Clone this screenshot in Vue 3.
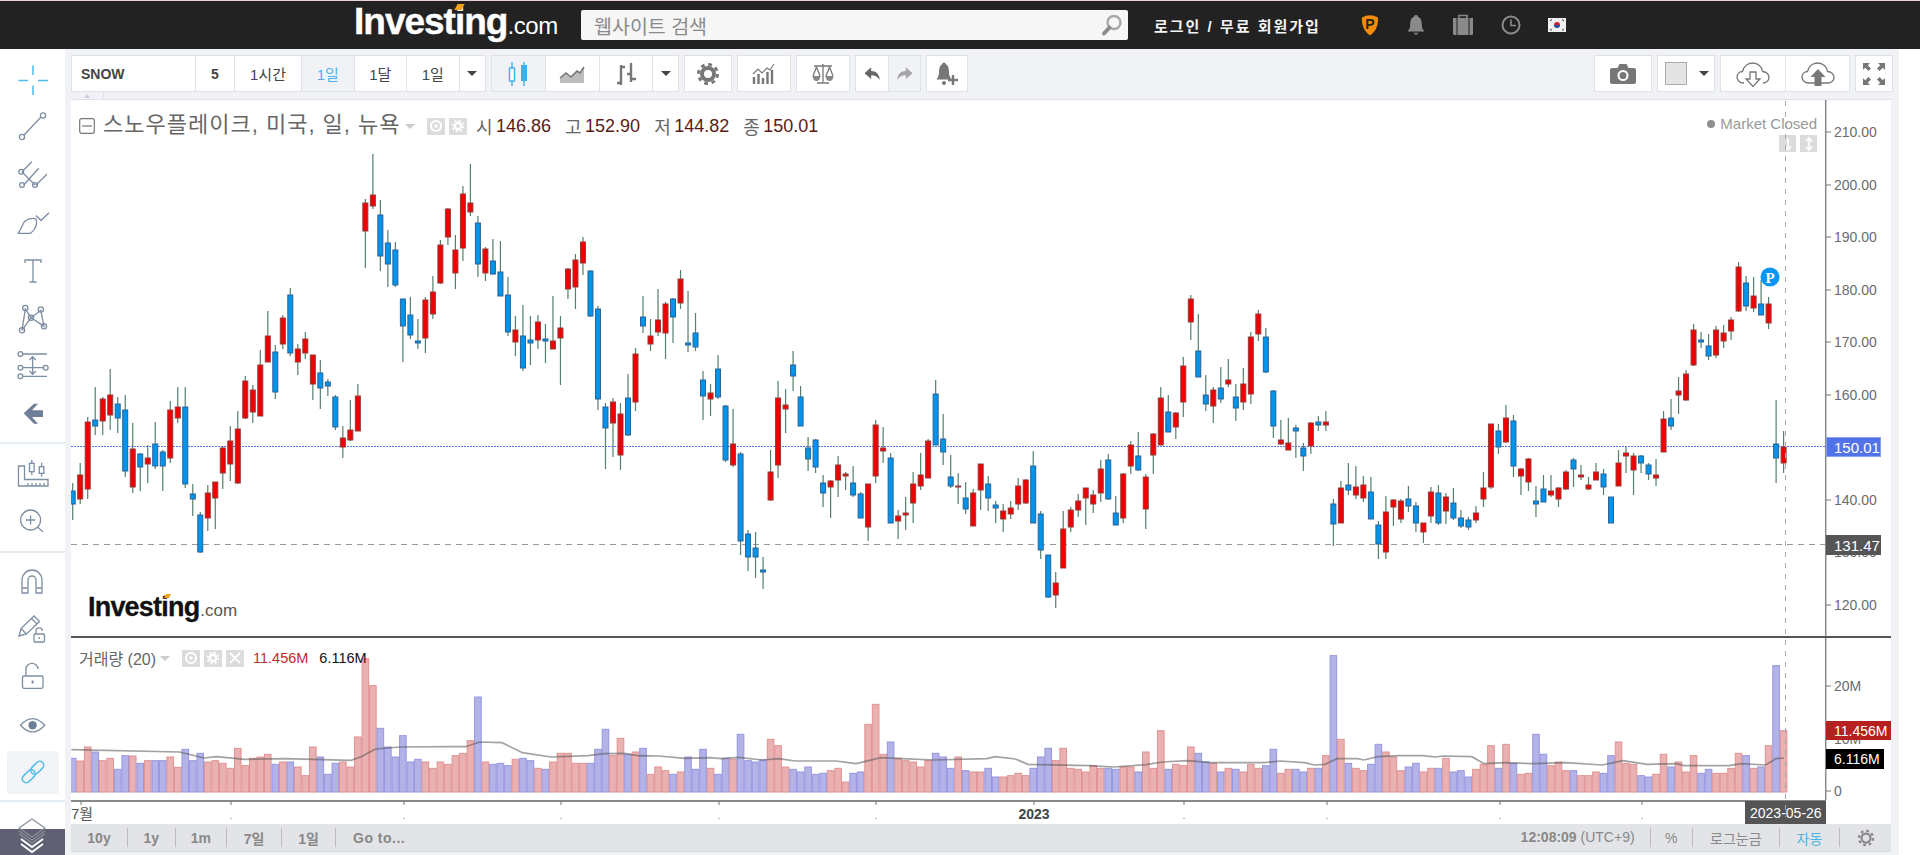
<template>
  <div class="page">
    <header class="topbar">
      <div class="logo">
        <span class="logo-main">Investing</span><span class="logo-com">.com</span>
        <i class="logo-dot"></i>
      </div>
      <div class="search">
        <span>웹사이트 검색</span>
        <svg width="24" height="24" viewBox="0 0 24 24"><circle cx="14" cy="9.5" r="6.5" fill="none" stroke="#a8a8a8" stroke-width="2.4"/><path d="M9.5 14.5 4 20.5" stroke="#8c8c8c" stroke-width="4" stroke-linecap="round"/></svg>
      </div>
      <div class="login">로그인 / 무료 회원가입</div>
      <div class="top-icons">
        <svg width="20" height="22" viewBox="0 0 20 22"><path d="M2 3.5Q10 -1 18 3.5C18.5 11 16 17.5 10 21.5 4 17.5 1.5 11 2 3.5Z" fill="#f58a07"/><text x="10" y="15" class="shield-p">P</text></svg>
        <svg width="20" height="22" viewBox="0 0 20 22"><path d="M10 1c1.2 0 2 .8 2 1.8C15 4 15.8 7 15.8 11c0 3 1 4.5 2.7 6.5H1.5C3.2 15.5 4.2 14 4.2 11 4.2 7 5 4 8 2.8 8 1.8 8.8 1 10 1Z" fill="#8a8a8a"/><path d="M7.5 18.8h5L10 21Z" fill="#8a8a8a"/></svg>
        <svg width="22" height="22" viewBox="0 0 22 22"><path d="M7 4V1.5h8V4" fill="none" stroke="#8a8a8a" stroke-width="1.6"/><path d="M1 4h3.5v17H2.5Q1 21 1 19.5ZM5.5 4h11v17h-11ZM17.5 4H21v15.5Q21 21 19.5 21h-2Z" fill="#8a8a8a"/></svg>
        <svg width="22" height="22" viewBox="0 0 22 22"><circle cx="11" cy="11" r="8.5" fill="none" stroke="#8a8a8a" stroke-width="2"/><path d="M11 5.5V11.500H16" fill="none" stroke="#8a8a8a" stroke-width="1.6"/></svg>
        <svg width="18" height="14" viewBox="0 0 18 14"><rect width="18" height="14" fill="#f0f0f0"/><path d="M6 7a3 3 0 0 1 6 0Z" fill="#d0202f"/><path d="M6 7a3 3 0 0 0 6 0Z" fill="#1c4a9c"/><path d="M2 3l2-1.5M14 1.500l2 1.5M2 11l2 1.5M14 12.500l2-1.5" stroke="#333" stroke-width="1"/></svg>
      </div>
    </header>

    <div class="body">
      <aside class="sidebar">
        <section class="tools tools-draw">
          <button class="tool"><svg viewBox="0 0 36 36" class="blue"><path d="M3.5 18.5H13M23 18.5H33M18 3.5V13M18 23.5V33"/></svg></button>
          <button class="tool"><svg viewBox="0 0 36 36"><path d="M9 25 26 7"/><circle cx="7" cy="27" r="2.6"/><circle cx="28" cy="5.5" r="2.6"/></svg></button>
          <button class="tool"><svg viewBox="0 0 36 36"><path d="M7 14.7 16.8 4.7M8.7 28 23.8 11.3M20.9 28 31.9 17.3M7 15 20 28"/><circle cx="6.2" cy="14.7" r="2.4"/><circle cx="7" cy="28" r="2.4"/><circle cx="20" cy="28" r="2.4"/></svg></button>
          <button class="tool"><svg viewBox="0 0 36 36"><path d="M3.4 28.3 9.5 16.5Q15 12 21 14 23.5 22 15.6 28.3ZM21 10.5 26 15.5 34 7.7"/></svg></button>
          <button class="tool"><svg viewBox="0 0 36 36"><path d="M10 11V8H26V11M18 8V30M14.5 30H21.5"/></svg></button>
          <button class="tool"><svg viewBox="0 0 36 36"><path d="M7 30.3 10.3 9 16 17.7 25.8 10.3 29 26.3 16 17.7 7 30.3"/><circle cx="10.3" cy="8" r="2.6"/><circle cx="25.8" cy="9.5" r="2.6"/><circle cx="16" cy="17.7" r="2.6"/><circle cx="29" cy="26.3" r="2.6"/><circle cx="7" cy="30.3" r="2.6"/></svg></button>
          <button class="tool"><svg viewBox="0 0 36 36"><path d="M8 7H32M8 20.7H28M8 29.3H32M17.6 10V27M14.5 13 17.6 9.7 20.7 13M14.5 24 17.6 27.3 20.7 24"/><circle cx="5.4" cy="7" r="2.4"/><circle cx="5.4" cy="20.7" r="2.4"/><circle cx="5.4" cy="29.3" r="2.4"/><circle cx="30.7" cy="20.7" r="2.4"/></svg></button>
          <button class="tool"><svg viewBox="0 0 36 36"><path class="solid" d="M8.7 18.3 19 8.7H23L17 15.3H28V22H17L23 28.7H19Z"/></svg></button>
        </section>
        <section class="tools tools-measure">
          <button class="tool"><svg viewBox="0 0 36 36"><path d="M3.5 11V31H33V24.5H9.5V11ZM13 31V28M17 31V28M21 31V28M25 31V28M29 31V28M16.8 5V8.3M16.8 16.7V20M26.6 7.7V11.7M26.6 18.3V21.7"/><rect x="14.5" y="8.3" width="4.6" height="8.4"/><rect x="24.3" y="11.7" width="4.6" height="6.6"/></svg></button>
          <button class="tool"><svg viewBox="0 0 36 36"><circle cx="15.6" cy="17" r="10"/><path d="M22.5 24 28 28.7M11 17H20.2M15.6 12.4V21.6"/></svg></button>
        </section>
        <section class="tools tools-misc">
          <button class="tool"><svg viewBox="0 0 36 36"><path d="M7 30V17a10 10 0 0 1 20 0V30H21V17a4 4 0 0 0-8 0V30ZM7 25H13M21 25H27"/></svg></button>
          <button class="tool"><svg viewBox="0 0 36 36"><path d="M4 25 6 17.5 19 5 24.5 10.5 11.5 23ZM16.5 7.5 22 13M6 17.5 11.5 23M21 23V20a3.2 3.2 0 0 1 6.4 0"/><rect x="19" y="23" width="10.5" height="8" rx="1"/><path d="M24.2 26V28"/></svg></button>
          <button class="tool"><svg viewBox="0 0 36 36"><path d="M11 17V10a6 5.7 0 0 1 12 0"/><rect x="7.5" y="17" width="20.5" height="12.3" rx="1.5"/><path d="M17.6 21.5V24.5" stroke-width="2"/></svg></button>
          <button class="tool"><svg viewBox="0 0 36 36"><path d="M5.5 18.3Q17.6 5 29.7 18.3 17.6 31.6 5.5 18.3Z"/><circle class="solid" cx="17.6" cy="18.3" r="4.2"/></svg></button>
          <button class="tool tool-on"><svg viewBox="0 0 36 36" class="blue"><g transform="rotate(-45 18 18)"><rect x="4.5" y="14" width="15" height="8" rx="4"/><rect x="16.5" y="14" width="15" height="8" rx="4"/></g></svg></button>
        </section>
        <section class="layers">
          <div class="layers-bar"></div>
          <svg class="layers-icon" width="36" height="40" viewBox="0 0 36 40"><path d="M18 4 31 13 18 22 5 13Z" fill="none" stroke="#8a8f9c" stroke-width="1.2"/><path d="M5 16 18 25 31 16M5 19 18 28 31 19" fill="none" stroke="#8a8f9c" stroke-width="1.2"/><path d="M7 24 18 32 29 24M7 29 18 37 29 29" fill="none" stroke="#fff" stroke-width="2"/></svg>
        </section>
      </aside>

      <main class="workspace">
        <div class="toolbar">
          <div class="group">
            <div class="cell cell-symbol">SNOW</div>
            <div class="cell cell-five">5</div>
            <div class="cell cell-hour">1시간</div>
            <div class="cell cell-tf on">1일</div>
            <div class="cell cell-tf">1달</div>
            <div class="cell cell-tf">1일</div>
            <div class="cell cell-caret"><i class="caret"></i></div>
          </div>
          <div class="group">
            <div class="cell cell-type active">
              <svg width="24" height="26" viewBox="0 0 24 26"><path d="M6 1V25M18 1V25" stroke="#3bb1ea" stroke-width="1.4"/><rect x="3.5" y="7" width="5" height="13" fill="#fff" stroke="#3bb1ea" stroke-width="1.4"/><rect x="15" y="4" width="6" height="16" fill="#3bb1ea"/></svg>
            </div>
            <div class="cell cell-type">
              <svg width="26" height="18" viewBox="0 0 26 18"><path d="M1 18V13L7 8 12 12 18 6 21 8 25 2V18Z" fill="#bdbdbd"/><path d="M1 13 7 8 12 12 18 6 21 8 25 2" fill="none" stroke="#777" stroke-width="1.6"/></svg>
            </div>
            <div class="cell cell-type">
              <svg width="24" height="24" viewBox="0 0 24 24"><path d="M7 3V23M17 1V20M3 21H7M7 5H11M13 12H17M17 17H22" fill="none" stroke="#777" stroke-width="2.4"/></svg>
            </div>
            <div class="cell cell-caret"><i class="caret"></i></div>
          </div>
          <div class="group">
            <div class="cell cell-gear">
              <svg width="24" height="24" viewBox="0 0 24 24"><circle cx="12" cy="12" r="6" fill="none" stroke="#777" stroke-width="4"/><circle cx="12" cy="12" r="9.5" fill="none" stroke="#777" stroke-width="3" stroke-dasharray="3.7 3.76"/></svg>
            </div>
          </div>
          <div class="group">
            <div class="cell cell-study">
              <svg width="24" height="20" viewBox="0 0 24 20"><path d="M2 20V13M6.5 20V10M11 20V14M15.5 20V8M20 20V6" stroke="#777" stroke-width="2.4"/><path d="M1 10 6 5 10 9 15 4 18 6 22 0" fill="none" stroke="#777" stroke-width="1.1"/></svg>
            </div>
          </div>
          <div class="group">
            <div class="cell cell-study">
              <svg width="24" height="20" viewBox="0 0 24 20"><path d="M12 0V18M6 19H18M3 2H21M5.5 3 2 12M5.5 3 9 12M18.5 3 15 12M18.5 3 22 12" fill="none" stroke="#777" stroke-width="1.3"/><path d="M1.5 12H9.5Q9 17 5.5 17 2 17 1.5 12ZM14.5 12H22.5Q22 17 18.5 17 15 17 14.5 12Z" fill="#888"/></svg>
            </div>
          </div>
          <div class="group">
            <div class="cell cell-undo">
              <svg width="20" height="20" viewBox="0 0 24 24"><path d="M3 11 11 4V8.5C17 8.5 20.5 12 21.5 19 18.5 15 15 13.5 11 13.5V18Z" fill="#666"/></svg>
            </div>
            <div class="cell cell-redo">
              <svg width="20" height="20" viewBox="0 0 24 24"><path d="M21 11 13 4V8.5C7 8.5 3.5 12 2.5 19 5.5 15 9 13.5 13 13.5V18Z" fill="#a5a5a5"/></svg>
            </div>
          </div>
          <div class="group">
            <div class="cell cell-alert">
              <svg width="24" height="26" viewBox="0 0 24 26"><path d="M9 1.5c1 0 1.8.8 1.8 1.8C13.5 4.500 14 8 14 12c0 2.5 1 4 2.5 6.5H1.5C3 16 4 14.5 4 12 4 8 4.5 4.500 7.2 3.300 7.2 2.300 8 1.5 9 1.5Z" fill="#777"/><circle cx="9" cy="22" r="2" fill="#777"/><path d="M18 14V24M13 19H23" stroke="#777" stroke-width="2.4"/></svg>
            </div>
          </div>
          <div class="toolbar-gap"></div>
          <div class="group">
            <div class="cell cell-wide">
              <svg width="26" height="20" viewBox="0 0 26 20"><path d="M2 4H7.5L9.5 0H16.5L18.5 4H24Q26 4 26 6V18Q26 20 24 20H2Q0 20 0 18V6Q0 4 2 4Z" fill="#777"/><circle cx="13" cy="11.5" r="4.5" fill="none" stroke="#fff" stroke-width="2"/></svg>
            </div>
          </div>
          <div class="group">
            <div class="cell cell-wide cell-color">
              <span class="swatch"></span>
              <i class="caret"></i>
            </div>
          </div>
          <div class="group">
            <div class="cell cell-cloud">
              <svg width="36" height="26" viewBox="0 0 36 26"><path d="M9 22C4 22 2 18.5 2 16 2 13 4.5 10.5 7.5 10.5 8.5 5.5 12.5 2 17.5 2 23 2 27 6 27.5 10.5 31 10.5 34 13 34 16.5 34 20 31 22 28 22" fill="none" stroke="#777" stroke-width="1.3"/><path d="M15 11H21V18H25L18 25.5 11 18H15Z" fill="#fff" stroke="#777" stroke-width="1.3"/></svg>
            </div>
            <div class="cell cell-cloud">
              <svg width="36" height="26" viewBox="0 0 36 26"><path d="M9 22C4 22 2 18.5 2 16 2 13 4.5 10.5 7.5 10.5 8.5 5.5 12.5 2 17.5 2 23 2 27 6 27.5 10.5 31 10.5 34 13 34 16.5 34 20 31 22 28 22H9" fill="none" stroke="#777" stroke-width="1.3"/><path d="M14.5 25V16H10.5L18 8 25.5 16H21.5V25Z" fill="#777"/></svg>
            </div>
          </div>
          <div class="group">
            <div class="cell cell-full">
              <svg width="24" height="24" viewBox="0 0 24 24"><path d="M1 1H8L5.8 3.2 9 6.4 6.4 9 3.2 5.8 1 8ZM23 1V8L20.8 5.8 17.6 9 15 6.4 18.2 3.2 16 1ZM1 23V16L3.2 18.2 6.4 15 9 17.6 5.8 20.8 8 23ZM23 23H16L18.2 20.8 15 17.6 17.6 15 20.8 18.2 23 16Z" fill="#777"/></svg>
            </div>
          </div>
        </div>
        <div class="strip"><div class="strip-handle"><i></i></div></div>

        <div class="chart">
          <div class="pane-price">
            <svg class="plot" width="1820" height="536" viewBox="71 100 1820 536">
              <line x1="71" x2="1826" y1="446.5" y2="446.5" class="last-line"/>
              <line x1="71" x2="1826" y1="544.5" y2="544.5" class="prev-line"/>
              <g v-for="c in bars" :key="c.x">
                <line :x1="c.x" :x2="c.x" :y1="c.hi" :y2="c.lo" class="wick"/>
                <rect :x="c.x - 2.5" :y="c.top" width="5" :height="Math.max(c.bot - c.top, 1)" :class="c.dir === 'r' ? 'up' : 'down'"/>
              </g>
              <circle cx="1770" cy="277" r="9.5" fill="#0a95f2"/>
              <text x="1770" y="282.5" class="marker">P</text>
              <line x1="1825.7" x2="1825.7" y1="100" y2="636" class="axis"/>
              <g v-for="p in priceTicks" :key="p.label">
                <line x1="1826" x2="1831" :y1="p.y" :y2="p.y" class="tick"/>
                <text x="1834" :y="p.y + 5" class="axis-text">{{ p.label }}</text>
              </g>
            </svg>
            <div class="legend">
              <svg class="collapse" width="16" height="16" viewBox="0 0 16 16"><rect x=".7" y=".7" width="14.6" height="14.6" rx="2" fill="none" stroke="#777" stroke-width="1.2"/><path d="M3 8H13" stroke="#777" stroke-width="1.2"/></svg>
              <span class="legend-title">스노우플레이크, 미국, 일, 뉴욕</span>
              <i class="tri"></i>
              <span class="mini"><svg width="14" height="14" viewBox="0 0 14 14"><circle cx="7" cy="7" r="5" fill="none" stroke="#fff" stroke-width="2"/><circle cx="7" cy="7" r="1.8" fill="#fff"/></svg></span>
              <span class="mini"><svg width="14" height="14" viewBox="0 0 14 14"><circle cx="7" cy="7" r="3.2" fill="none" stroke="#fff" stroke-width="2.4"/><circle cx="7" cy="7" r="5.4" fill="none" stroke="#fff" stroke-width="1.8" stroke-dasharray="2.1 2.14"/></svg></span>
              <div class="ohlc">
                <span v-for="q in quote" :key="q.k" class="quote"><em>{{ q.k }}</em><b>{{ q.v }}</b></span>
              </div>
            </div>
            <div class="market">
              <div class="market-row"><i></i>Market Closed</div>
              <div class="scale-btns">
                <span class="mini"><svg width="10" height="14" viewBox="0 0 10 14"><path d="M5 1V10M2 9 5 13 8 9" fill="none" stroke="#fff" stroke-width="1.6"/></svg></span>
                <span class="mini"><svg width="10" height="14" viewBox="0 0 10 14"><path d="M5 2V12M2 4.5 5 1 8 4.5M2 9.5 5 13 8 9.5" fill="none" stroke="#fff" stroke-width="1.6"/></svg></span>
              </div>
            </div>
            <div class="tag tag-last">150.01</div>
            <div class="tag tag-prev">131.47</div>
            <div class="chart-logo">
              <span class="chart-logo-main">Investing</span><span class="chart-logo-com">.com</span>
              <i class="chart-logo-dot"></i>
            </div>
          </div>

          <div class="pane-volume">
            <svg class="plot" width="1820" height="162" viewBox="71 638 1820 162">
              <rect v-for="v in volumes" :key="v.x" :x="v.x - 3.3" :y="v.top" width="6.6" :height="792 - v.top" :class="v.dir === 'r' ? 'vol-up' : 'vol-down'"/>
              <polyline :points="smaPoints" class="sma"/>
              <line x1="1825.7" x2="1825.7" y1="638" y2="800" class="axis"/>
              <g v-for="p in volumeTicks" :key="p.label">
                <line x1="1826" x2="1831" :y1="p.y" :y2="p.y" class="tick"/>
                <text x="1834" :y="p.y + 5" class="axis-text">{{ p.label }}</text>
              </g>
            </svg>
            <div class="legend legend-vol">
              <span class="vol-title">거래량 (20)</span>
              <i class="tri"></i>
              <span class="mini"><svg width="14" height="14" viewBox="0 0 14 14"><circle cx="7" cy="7" r="5" fill="none" stroke="#fff" stroke-width="2"/><circle cx="7" cy="7" r="1.8" fill="#fff"/></svg></span>
              <span class="mini"><svg width="14" height="14" viewBox="0 0 14 14"><circle cx="7" cy="7" r="3.2" fill="none" stroke="#fff" stroke-width="2.4"/><circle cx="7" cy="7" r="5.4" fill="none" stroke="#fff" stroke-width="1.8" stroke-dasharray="2.1 2.14"/></svg></span>
              <span class="mini"><svg width="14" height="14" viewBox="0 0 14 14"><path d="M2 2 12 12M12 2 2 12" stroke="#fff" stroke-width="1.8"/></svg></span>
              <span class="vol-red">11.456M</span>
              <span class="vol-black">6.116M</span>
            </div>
            <div class="tag tag-vol-red">11.456M</div>
            <div class="tag tag-vol-black">6.116M</div>
          </div>

          <div class="pane-dates">
            <svg class="plot" width="1820" height="24" viewBox="71 800 1820 24">
              <line x1="71" x2="1826" y1="801" y2="801" class="date-line"/>
              <g v-for="t in dateTicks" :key="t">
                <line :x1="t" :x2="t" y1="801" y2="805" class="tick"/>
                <line :x1="t - .5" :x2="t + .5" y1="818.5" y2="818.5" class="tick"/>
              </g>
              <text x="71" y="819" class="date-text">7월</text>
              <text x="1034" y="819" class="date-year">2023</text>
            </svg>
            <div class="tag tag-date">2023-05-26</div>
          </div>

          <div class="rangebar">
            <span v-for="r in ranges" :key="r.label" class="range" :style="{ width: r.width + 'px' }">{{ r.label }}</span>
            <span class="range-go">Go to...</span>
            <span class="rangebar-gap"></span>
            <span class="clock"><b>12:08:09</b> (UTC+9)</span>
            <span v-for="o in options" :key="o.label" class="range opt" :class="{ 'opt-on': o.on }" :style="{ width: o.width + 'px' }">{{ o.label }}</span>
            <span class="opt-gear">
              <svg width="18" height="18" viewBox="0 0 24 24"><circle cx="12" cy="12" r="6" fill="none" stroke="#888" stroke-width="3"/><circle cx="12" cy="12" r="9.5" fill="none" stroke="#888" stroke-width="3" stroke-dasharray="3.7 3.76"/></svg>
            </span>
          </div>

          <div class="crossline"></div>
        </div>
      </main>
    </div>
  </div>
</template>

<script setup>
import { computed } from 'vue'

// hi, body top, body bottom, lo as chart y, then direction
const candles = [
  [483,491,504,520,'b'],[463,475,499,504,'r'],[417,422,489,499,'r'],[387,420,426,435,'b'],[397,399,421,435,'r'],
  [369,395,415,430,'r'],[397,404,418,433,'b'],[395,410,471,477,'b'],[423,449,487,493,'r'],[453,454,467,491,'b'],
  [445,458,464,483,'r'],[422,444,466,469,'b'],[450,452,466,491,'b'],[401,410,458,463,'r'],[387,407,418,423,'r'],
  [387,407,484,488,'b'],[484,494,499,516,'b'],[512,515,552,553,'b'],[485,493,518,531,'r'],[482,482,498,529,'r'],
  [446,448,473,489,'r'],[426,441,464,481,'r'],[411,429,483,484,'r'],[376,381,418,419,'r'],[385,390,412,423,'r'],
  [350,365,416,416,'r'],[311,336,362,362,'r'],[345,352,392,399,'b'],[315,318,344,349,'r'],[288,295,353,356,'b'],
  [344,349,362,375,'r'],[332,339,353,359,'r'],[355,355,384,400,'r'],[360,373,388,409,'b'],[379,382,386,396,'b'],
  [395,397,427,430,'b'],[426,438,447,458,'r'],[400,430,440,441,'r'],[384,396,431,431,'r'],[199,203,231,268,'r'],
  [154,195,206,209,'r'],[200,215,256,271,'b'],[230,243,264,287,'b'],[242,250,285,287,'b'],[299,299,326,362,'b'],
  [297,315,335,339,'b'],[319,341,343,349,'b'],[297,300,338,353,'r'],[276,292,314,319,'r'],[240,245,283,284,'r'],
  [208,209,237,245,'r'],[235,250,273,289,'r'],[186,194,248,261,'r'],[164,203,212,216,'r'],[216,223,264,277,'b'],
  [247,249,273,281,'r'],[239,261,274,275,'b'],[241,272,296,296,'b'],[277,295,332,336,'b'],[316,330,342,356,'r'],
  [305,336,368,371,'b'],[316,340,343,365,'b'],[315,322,340,349,'r'],[324,339,341,363,'b'],[296,341,349,349,'r'],
  [316,328,338,385,'r'],[268,269,289,299,'r'],[254,260,287,309,'r'],[237,242,263,275,'r'],[270,271,316,317,'b'],
  [306,309,399,410,'b'],[403,407,428,469,'b'],[398,402,423,457,'r'],[403,414,455,470,'r'],[374,398,435,436,'b'],
  [348,354,402,411,'r'],[296,317,326,333,'b'],[319,336,344,351,'r'],[289,320,332,336,'r'],[302,304,333,359,'r'],
  [298,299,317,343,'b'],[270,279,303,309,'r'],[291,343,345,352,'b'],[313,333,347,351,'b'],[371,380,396,420,'b'],
  [384,393,399,416,'r'],[355,369,397,399,'b'],[405,406,460,462,'b'],[409,444,465,467,'r'],[452,454,541,555,'b'],
  [530,534,557,571,'b'],[532,548,557,578,'b'],[557,570,572,589,'b'],[450,472,500,501,'r'],[381,398,465,478,'r'],
  [389,405,409,433,'r'],[351,365,376,391,'b'],[386,397,426,426,'b'],[437,448,459,471,'b'],[439,440,467,473,'b'],
  [475,483,493,507,'b'],[480,481,487,518,'r'],[456,465,480,497,'r'],[472,474,476,490,'r'],[466,483,495,497,'b'],
  [492,494,518,518,'b'],[484,484,527,541,'r'],[420,425,476,483,'r'],[427,448,451,463,'r'],[453,458,523,523,'b'],
  [510,516,521,539,'r'],[497,513,515,530,'r'],[472,484,503,523,'r'],[453,475,486,490,'r'],[439,441,478,478,'r'],
  [380,394,445,445,'b'],[414,439,452,465,'b'],[455,477,486,488,'b'],[473,486,487,504,'r'],[482,498,509,514,'b'],
  [489,493,526,526,'r'],[464,464,490,510,'r'],[476,484,498,511,'b'],[501,505,508,523,'b'],[504,511,519,532,'r'],
  [501,508,514,519,'r'],[478,486,504,510,'r'],[479,480,503,504,'r'],[451,466,523,523,'b'],[511,514,550,559,'b'],
  [555,555,597,598,'b'],[572,583,595,608,'r'],[511,529,568,568,'r'],[507,510,527,532,'r'],[494,501,510,517,'r'],
  [488,488,498,525,'r'],[490,495,504,513,'r'],[460,469,493,502,'r'],[454,460,499,500,'b'],[496,513,525,525,'b'],
  [473,474,518,523,'r'],[441,445,466,474,'r'],[432,456,470,471,'b'],[474,477,509,529,'r'],[433,434,455,474,'r'],
  [387,398,445,445,'r'],[395,412,432,432,'b'],[412,413,427,439,'r'],[357,366,402,417,'r'],[295,299,322,340,'r'],
  [314,351,377,377,'b'],[375,395,404,411,'b'],[387,390,406,423,'r'],[367,388,399,403,'b'],[359,380,384,387,'r'],
  [384,397,408,421,'b'],[368,384,402,410,'r'],[332,337,394,404,'r'],[310,314,334,341,'r'],[328,337,372,373,'b'],
  [390,391,426,438,'b'],[420,440,444,445,'r'],[418,443,450,450,'r'],[425,428,431,458,'b'],[443,448,456,471,'b'],
  [422,423,446,454,'r'],[416,422,425,431,'b'],[411,422,425,431,'r'],[499,504,524,546,'b'],[481,488,523,523,'r'],
  [463,485,490,495,'b'],[466,487,495,499,'r'],[476,485,498,502,'r'],[477,492,519,519,'b'],[521,525,544,559,'b'],
  [496,512,552,559,'r'],[499,500,507,526,'r'],[499,501,519,523,'r'],[486,499,506,512,'b'],[502,506,523,532,'b'],
  [523,523,532,543,'r'],[487,492,516,523,'r'],[485,493,523,525,'b'],[493,497,511,524,'r'],[488,503,518,520,'b'],
  [510,518,526,528,'b'],[517,520,527,530,'b'],[506,513,520,523,'r'],[472,488,499,507,'r'],[424,424,487,489,'r'],
  [424,431,447,454,'b'],[405,418,442,443,'r'],[415,421,466,477,'b'],[468,469,476,495,'r'],[458,459,482,491,'r'],
  [486,501,504,517,'b'],[475,489,502,502,'b'],[475,491,495,497,'r'],[487,488,499,507,'r'],[470,472,489,490,'r'],
  [458,460,469,487,'b'],[465,475,477,480,'r'],[477,485,489,490,'r'],[463,472,480,480,'r'],[469,474,487,495,'b'],
  [497,497,523,523,'b'],[450,463,486,486,'r'],[447,453,456,473,'r'],[453,456,470,495,'r'],[455,456,463,473,'b'],
  [463,465,474,480,'b'],[459,475,478,486,'r'],[411,419,452,452,'r'],[399,418,426,430,'b'],[377,391,395,414,'r'],
  [370,374,400,401,'r'],[324,330,365,366,'r'],[332,340,342,348,'b'],[334,346,356,360,'b'],[326,330,355,358,'r'],
  [325,333,341,348,'r'],[317,320,331,340,'r'],[262,267,311,312,'r'],[276,283,306,311,'b'],[277,296,308,312,'r'],
  [280,304,315,315,'b'],[297,304,323,329,'r'],[400,444,458,483,'b'],[431,447,463,473,'r']
]

// bar tops measured off the zoomed pane, 3 units per pixel below y 600
const volumeRaw = ('b475 r483 r441 b456 r482 r475 b508 b467 r468 b490 r482 b482 b482 r471 r502 b448 b482 b460 r486 r482 ' +
  'r490 r505 r445 r497 r475 r471 r463 b493 r486 b486 r501 r527 r441 b471 b523 b490 r486 r501 r411 r176 ' +
  'r257 b385 b441 b471 b407 b486 b478 r486 r505 r486 r493 r467 r460 r422 b291 r486 b493 b490 b497 r478 ' +
  'b475 b482 r505 b508 r486 r460 r460 r490 r490 b490 b448 b388 r467 r415 b463 r456 b445 r523 r501 r512 ' +
  'b523 r516 b471 b508 b448 r505 b523 b475 r478 b403 b482 b486 b480 r418 r437 r501 b508 b516 b501 b523 ' +
  'b520 r512 r505 r546 b520 b516 r373 r313 r463 b426 r475 r482 r486 r501 r482 b460 b471 b505 r471 b512 ' +
  'r516 r516 b505 b531 r531 r527 r520 r527 b505 b471 b445 r482 r445 r505 r508 r516 r497 r505 b505 b508 ' +
  'r501 r501 b516 r456 r505 r392 b508 r493 r497 r441 b460 b486 r490 b516 r505 b508 r516 r493 r505 b497 ' +
  'b448 r520 r508 b508 b516 r505 b505 r467 b167 r418 b490 r505 r512 b493 b433 r456 r471 r512 b501 b490 ' +
  'r516 r505 b505 r475 b516 b512 b531 r508 r493 r437 b505 r433 b490 r523 r520 b403 b463 r497 r486 r512 ' +
  'b512 r527 r527 r516 b520 b467 r426 r490 r493 b527 b531 r523 r463 b501 r486 r516 r467 b520 b508 r520 ' +
  'r520 r505 r460 b467 r505 b501 r437 b197 r392').split(' ')

const barX = (i) => 72.7 + 7.504 * i

const bars = computed(() => candles.map((c, i) => ({
  x: barX(i), hi: c[0], top: c[1], bot: c[2], lo: c[3], dir: c[4]
})))

const volumes = computed(() => volumeRaw.map((s, i) => ({
  x: barX(i), dir: s[0], top: 600 + Number(s.slice(1)) / 3
})))

const smaParts = [
  [0, [[175,449],[440,456],[500,474],[530,470],[600,478],[700,476],[860,481],[885,470],[920,447],[980,441],[1100,440],[1140,440],[1175,426],[1230,428],[1280,458],[1350,471],[1440,467],[1480,461],[1530,460],[1568,468]]],
  [640, [[0,467],[45,468],[110,475],[170,473],[200,476],[240,472],[300,480],[340,476],[380,483],[480,483],[530,491],[590,473],[640,476],[720,480],[850,476],[870,470],[920,477],[950,493],[1100,497],[1160,501],[1240,494],[1280,486],[1340,482],[1400,488],[1530,488],[1568,483]]],
  [1280, [[0,483],[60,488],[85,495],[110,493],[140,476],[190,476],[205,480],[240,470],[290,467],[350,467],[380,471],[400,468],[470,470],[500,491],[550,488],[620,491],[700,488],[790,495],[840,482],[900,493],[970,491],[990,497],[1100,497],[1130,491],[1190,495],[1215,476],[1235,474]]]
]

const smaPoints = computed(() => smaParts
  .flatMap(([off, pts]) => pts.map(([x, y]) => `${(off + x / 2.45).toFixed(1)},${(600 + y / 3).toFixed(1)}`))
  .join(' '))

const priceTicks = [
  { label: '210.00', y: 132 }, { label: '200.00', y: 185 }, { label: '190.00', y: 237 },
  { label: '180.00', y: 290 }, { label: '170.00', y: 342 }, { label: '160.00', y: 395 },
  { label: '140.00', y: 500 }, { label: '130.00', y: 552 }, { label: '120.00', y: 605 }
]
const volumeTicks = [
  { label: '20M', y: 686 }, { label: '10M', y: 739 }, { label: '0', y: 791 }
]
const dateTicks = [81, 231, 404, 561, 719, 876, 1034, 1184, 1327, 1500, 1642]
const quote = [
  { k: '시', v: '146.86' }, { k: '고', v: '152.90' }, { k: '저', v: '144.82' }, { k: '종', v: '150.01' }
]
const ranges = [
  { label: '10y', width: 57 }, { label: '1y', width: 47.5 }, { label: '1m', width: 51.5 },
  { label: '7일', width: 55 }, { label: '1일', width: 54 }
]
const options = [
  { label: '%', width: 42 }, { label: '로그눈금', width: 87.4 }, { label: '자동', width: 60, on: true }
]
</script>

<style scoped>
.page {
  width: 1920px;
  height: 855px;
  overflow: hidden;
  display: flex;
  flex-direction: column;
  background: #fff;
  font-family: "Liberation Sans", "Noto Sans CJK KR", sans-serif;
}

.topbar {
  height: 49px;
  box-sizing: border-box;
  flex: none;
  display: flex;
  align-items: center;
  padding-left: 354px;
  background: #222;
  border-top: 1px solid #e6d3da;
}
.logo {
  position: relative;
  width: 227px;
  white-space: nowrap;
  color: #fff;
  line-height: 36px;
}
.logo-main { font-size: 37px; font-weight: 700; letter-spacing: -1px; -webkit-text-stroke: .4px #fff; }
.logo-com { font-size: 24px; letter-spacing: -.4px; }
.logo-dot {
  position: absolute;
  left: 102px;
  top: 0;
  width: 7px;
  height: 6px;
  background: #f3a21c;
  transform: skewX(-30deg);
}
.search {
  width: 547px;
  height: 30px;
  display: flex;
  align-items: center;
  justify-content: space-between;
  box-sizing: border-box;
  padding: 0 4px 0 13px;
  border-radius: 2px;
  background: #f6f6f6;
  color: #8a8a8a;
  font-size: 19.5px;
}
.login {
  margin-left: 26px;
  width: 176px;
  color: #f4f4f4;
  font-size: 15px;
  font-weight: 700;
  letter-spacing: 2px;
  white-space: nowrap;
}
.top-icons {
  display: flex;
  align-items: center;
  gap: 26px;
  margin-left: 30px;
}
.shield-p { font: 700 14px "Liberation Sans", sans-serif; fill: #222; text-anchor: middle; }

.body { flex: 1; display: flex; min-height: 0; }

.sidebar {
  width: 65px;
  flex: none;
  display: flex;
  flex-direction: column;
  background: #fff;
}
.tools { display: flex; flex-direction: column; align-items: center; border-bottom: 2px solid #e6ecf4; }
.tools-draw { padding: 7.5px 0 5px; }
.tools-measure { padding: 6px 0 6px; }
.tools-misc { padding: 4px 0 6px; }
.tool {
  width: 52px;
  height: 47.5px;
  padding: 0;
  border: 0;
  border-radius: 3px;
  background: none;
  display: flex;
  align-items: center;
  justify-content: center;
}
.tools-misc .tool { height: 48px; }
.tool svg {
  width: 36px;
  height: 36px;
  fill: none;
  stroke: #7d8ea3;
  stroke-width: 1.3;
}
.tool svg.blue { stroke: #4cbcec; stroke-width: 1.5; }
.tool .solid { fill: #6d8097; stroke: none; }
.tools-misc .tool-on { height: 43px; margin-top: 2px; background: #f2f4f7; }

.layers { position: relative; flex: 1; }
.layers-bar { position: absolute; left: 0; right: 0; bottom: 0; height: 26px; background: #5f6172; }
.layers-icon { position: absolute; left: 14px; top: 13px; }

.workspace {
  width: 1834px;
  flex: none;
  display: flex;
  flex-direction: column;
  box-sizing: border-box;
  padding: 0 8px 4px 6px;
  background: #f0f2f6;
}
.toolbar {
  height: 43px;
  flex: none;
  box-sizing: border-box;
  padding-top: 6px;
  display: flex;
  gap: 5px;
  margin-right: -2px;
}
.toolbar-gap { flex: 1; }
.group { display: flex; height: 37px; box-sizing: border-box; border: 1px solid #dfe2e8; background: #fff; }
.cell {
  display: flex;
  align-items: center;
  justify-content: center;
  box-sizing: border-box;
  height: 100%;
  border-left: 1px solid #dfe2e8;
  color: #444;
  font-size: 15px;
}
.cell:first-child { border-left: 0; }
.cell-symbol { width: 123px; justify-content: flex-start; padding-left: 9px; font-size: 14px; font-weight: 700; }
.cell-five { width: 39px; font-size: 14px; font-weight: 700; }
.cell-hour { width: 67px; }
.cell-tf { width: 52.5px; }
.cell-caret { width: 26px; }
.cell.on { color: #4ab4e6; background: #f0f2f6; }
.cell-type { width: 53.5px; }
.cell.active { background: #f0f2f6; }
.cell-gear { width: 46px; }
.cell-study { width: 52px; }
.cell-undo { width: 32px; }
.cell-redo { width: 32px; background: #f0f2f6; }
.cell-alert { width: 40px; }
.cell-wide { width: 56px; }
.cell-color { gap: 12px; justify-content: flex-start; padding-left: 7px; }
.cell-cloud { width: 64px; }
.cell-full { width: 36px; }
.caret {
  display: block;
  width: 0;
  height: 0;
  border-left: 5px solid transparent;
  border-right: 5px solid transparent;
  border-top: 5px solid #444;
}
.swatch { width: 20px; height: 21px; background: #e4e4e4; border: 1px solid #aaa; }

.strip { height: 7px; flex: none; }
.strip-handle {
  width: 33px;
  height: 7px;
  box-sizing: border-box;
  border-right: 1px solid #dfe2e8;
  display: flex;
  justify-content: center;
  align-items: center;
}
.strip-handle i {
  width: 0;
  height: 0;
  border-left: 3px solid transparent;
  border-right: 3px solid transparent;
  border-bottom: 4px solid #ccd0d6;
}

.chart {
  position: relative;
  flex: 1;
  display: flex;
  flex-direction: column;
  width: 1820px;
  background: #fff;
  border-top: 1px solid #dfe2e8;
}
.pane-price { position: relative; height: 536px; flex: none; border-bottom: 2px solid #555; }
.pane-volume { position: relative; height: 162px; flex: none; }
.pane-dates { position: relative; height: 24px; flex: none; }
.plot { display: block; }

.last-line { stroke: #5578f5; stroke-width: 1; stroke-dasharray: 2 1; }
.prev-line { stroke: #999; stroke-width: 1; stroke-dasharray: 6 5; }
.wick { stroke: #55806b; stroke-width: 1.2; }
.up { fill: #f00000; stroke: #963a3a; stroke-width: 1; }
.down { fill: #0095ea; stroke: #2a6299; stroke-width: 1; }
.marker { font: 700 15px "Liberation Serif", serif; fill: #fff; text-anchor: middle; }
.axis { stroke: #888; stroke-width: 1.5; }
.tick { stroke: #777; stroke-width: 1; }
.axis-text { font: 14px "Liberation Sans", sans-serif; fill: #6b6b6b; }

.legend {
  position: absolute;
  left: 8px;
  top: 13px;
  display: flex;
  align-items: center;
  white-space: nowrap;
}
.collapse { flex: none; }
.legend-title { margin: -3px 0 0 8px; width: 295px; color: #666; font-size: 22px; letter-spacing: 1px; line-height: 20px; }
.tri {
  width: 0;
  height: 0;
  margin: 0 0 0 7px;
  border-left: 5px solid transparent;
  border-right: 5px solid transparent;
  border-top: 5px solid #ccc;
}
.mini {
  width: 18px;
  height: 17px;
  margin-left: 4px;
  display: inline-flex;
  align-items: center;
  justify-content: center;
  background: #dcdcdc;
}
.legend > .tri + .mini { margin-left: 12px; }
.ohlc { display: flex; margin-left: 9px; }
.quote { display: flex; align-items: center; margin-right: 14px; }
.quote em { width: 20px; font-style: normal; font-size: 18px; color: #666; }
.quote b { font-weight: 400; font-size: 18px; color: #5c1a16; }

.market {
  position: absolute;
  right: 74px;
  top: 15px;
  display: flex;
  flex-direction: column;
  align-items: flex-end;
  gap: 3px;
  color: #999;
  font-size: 15px;
}
.market-row { display: flex; align-items: center; gap: 5px; }
.market-row i { width: 8px; height: 8px; border-radius: 50%; background: #8f8f8f; }
.scale-btns { display: flex; }
.scale-btns .mini { width: 17px; margin-left: 4px; }

.tag {
  position: absolute;
  display: flex;
  align-items: center;
  height: 20px;
  box-sizing: border-box;
  padding-left: 8px;
  color: #fff;
  font-size: 14px;
  white-space: nowrap;
}
.tag-last { left: 1755px; top: 337px; width: 55px; background: #5273e8; border: 1px solid #87a0f0; padding-left: 7px; font-size: 15px; }
.tag-prev { left: 1755px; top: 435px; width: 55px; background: #555; font-size: 15px; }
.tag-vol-red { left: 1755px; top: 83px; width: 65px; height: 19px; background: #b81f1f; }
.tag-vol-black { left: 1755px; top: 111px; width: 58px; background: #000; }
.tag-date { left: 1674px; top: 1px; width: 81px; height: 23px; padding-left: 5px; background: #555; }

.chart-logo {
  position: absolute;
  left: 17px;
  top: 493px;
  color: #111;
  white-space: nowrap;
  line-height: 28px;
}
.chart-logo-main { font-size: 27px; font-weight: 700; letter-spacing: -.8px; -webkit-text-stroke: .3px #111; }
.chart-logo-com { font-size: 17px; color: #555; margin-left: 1px; }
.chart-logo-dot {
  position: absolute;
  left: 77px;
  top: 1px;
  width: 5px;
  height: 4px;
  background: #f3a21c;
  transform: skewX(-30deg);
}

.sma { fill: none; stroke: rgba(85, 85, 85, .55); stroke-width: 1.7; }
.vol-up { fill: #e9b1b1; stroke: #e29292; stroke-width: 1; }
.vol-down { fill: #b3b3e8; stroke: #9696e2; stroke-width: 1; }
.legend-vol { top: 8px; left: 8px; }
.vol-title { width: 76px; color: #666; font-size: 16px; }
.legend-vol .tri { margin-left: 5px; }
.vol-red { margin-left: 9px; color: #c22a2a; font-size: 14.5px; }
.vol-black { margin-left: 11px; color: #111; font-size: 14.5px; }

.date-line { stroke: #888; stroke-width: 2; }
.date-text { font: 15px "Liberation Sans", "Noto Sans CJK KR", sans-serif; fill: #555; }
.date-year { font: 700 14px "Liberation Sans", sans-serif; fill: #444; text-anchor: middle; }

.rangebar {
  height: 28px;
  flex: none;
  box-sizing: border-box;
  display: flex;
  align-items: center;
  background: #e3e4e7;
  border-bottom: 1px solid #d8dade;
  color: #888;
  font-size: 14px;
  font-weight: 700;
}
.range {
  height: 19px;
  box-sizing: border-box;
  display: flex;
  align-items: center;
  justify-content: center;
  border-right: 1px solid #bdbdbd;
}
.range-go { margin-left: 17px; letter-spacing: .5px; }
.rangebar-gap { flex: 1; }
.clock { padding-right: 15px; font-weight: 400; font-size: 14px; border-right: 1px solid #bdbdbd; height: 19px; line-height: 19px; }
.clock b { font-weight: 700; }
.opt { font-weight: 400; }
.opt-on { color: #4ab4e6; }
.opt-gear { width: 51px; display: flex; justify-content: center; }

.crossline {
  position: absolute;
  left: 1714px;
  top: 1px;
  width: 1px;
  height: 716px;
  background: repeating-linear-gradient(to bottom, #aaa 0 5px, transparent 5px 11px);
}
</style>

<style>
html, body { margin: 0; padding: 0; background: #fff; }
</style>
